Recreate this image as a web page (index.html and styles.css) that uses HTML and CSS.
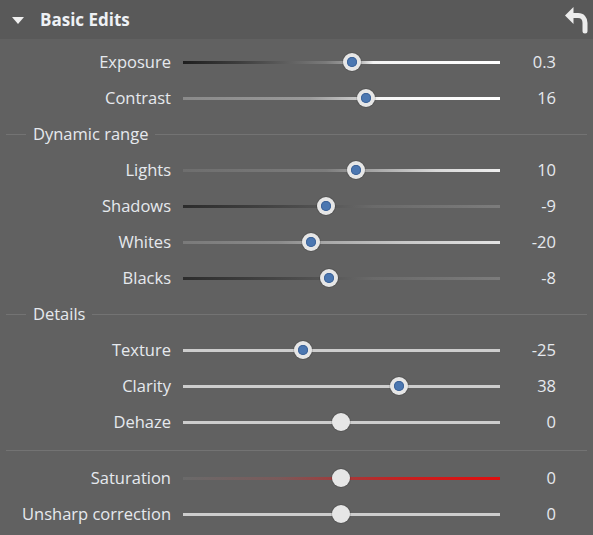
FILE: index.html
```html
<!DOCTYPE html>
<html>
<head>
<meta charset="utf-8">
<link rel="stylesheet" href="styles.css">
</head>
<body>
<div class="panel">
  <div class="header">
    <span class="caret"></span>
    <span class="title">Basic Edits</span>
    <svg class="revert" width="28" height="30" viewBox="0 0 28 30">
      <path d="M2 11.5 L10.5 3 L10.5 20 Z" fill="#ececec"/>
      <path d="M9 11.5 H15 C19.5 11.5 22 14.5 22 19 V27" fill="none" stroke="#ececec" stroke-width="5" stroke-linecap="round"/>
    </svg>
  </div>
  <div class="body">
    <div class="row"><span class="label">Exposure</span><div class="track t-exposure"><span class="knob blue" style="left:169px"></span></div><span class="value">0.3</span></div>
    <div class="row"><span class="label">Contrast</span><div class="track t-contrast"><span class="knob blue" style="left:183px"></span></div><span class="value">16</span></div>
    <div class="section"><span class="line short"></span><span class="stitle">Dynamic range</span><span class="line"></span></div>
    <div class="row"><span class="label">Lights</span><div class="track t-lights"><span class="knob blue" style="left:173px"></span></div><span class="value">10</span></div>
    <div class="row"><span class="label">Shadows</span><div class="track t-shadows"><span class="knob blue" style="left:143px"></span></div><span class="value">-9</span></div>
    <div class="row"><span class="label">Whites</span><div class="track t-whites"><span class="knob blue" style="left:128px"></span></div><span class="value">-20</span></div>
    <div class="row"><span class="label">Blacks</span><div class="track t-blacks"><span class="knob blue" style="left:146px"></span></div><span class="value">-8</span></div>
    <div class="section"><span class="line short"></span><span class="stitle">Details</span><span class="line"></span></div>
    <div class="row"><span class="label">Texture</span><div class="track t-plain"><span class="knob blue" style="left:120px"></span></div><span class="value">-25</span></div>
    <div class="row"><span class="label">Clarity</span><div class="track t-plain"><span class="knob blue" style="left:216px"></span></div><span class="value">38</span></div>
    <div class="row"><span class="label">Dehaze</span><div class="track t-plain"><span class="knob" style="left:158px"></span></div><span class="value">0</span></div>
    <div class="divider"></div>
    <div class="row"><span class="label">Saturation</span><div class="track t-sat"><span class="knob" style="left:158px"></span></div><span class="value">0</span></div>
    <div class="row"><span class="label">Unsharp correction</span><div class="track t-plain"><span class="knob" style="left:158px"></span></div><span class="value">0</span></div>
  </div>
</div>
</body>
</html>
```

FILE: styles.css
```css
html, body {
  margin: 0;
  padding: 0;
  background: #616161;
}
body {
  width: 593px;
  height: 535px;
  overflow: hidden;
  font-family: "Open Sans", "Noto Sans", sans-serif;
  color: #e6e9ee;
}
.panel {
  width: 593px;
  height: 535px;
  background: #616161;
}
.header {
  height: 39px;
  background: #595959;
  display: flex;
  align-items: center;
  padding-left: 12px;
  box-sizing: border-box;
  position: relative;
}
.caret {
  width: 0;
  height: 0;
  border-left: 6px solid transparent;
  border-right: 6px solid transparent;
  border-top: 7px solid #f0f0f0;
  margin-right: 16px;
  margin-top: 1px;
}
.title {
  font-weight: 700;
  font-size: 17px;
  color: #eef1f5;
}
.revert {
  position: absolute;
  left: 563px;
  top: 4px;
}
.body {
  padding-top: 5px;
}
.row {
  display: grid;
  grid-template-columns: 171px 317px 44px;
  column-gap: 12px;
  height: 36px;
  align-items: center;
  font-size: 16.5px;
}
.label {
  text-align: right;
  white-space: nowrap;
  margin-top: -2px;
}
.value {
  text-align: right;
  margin-top: -2px;
}
.track {
  position: relative;
  height: 3px;
  background: #c8c8c8;
}
.t-plain {
  background: #cdcdcd;
}
.t-exposure {
  background: linear-gradient(to right, #1e1e1e 0%, #3e3e3e 18%, #7a7a7a 45%, #aaaaaa 55%, #f4f4f4 60%, #ffffff 100%);
}
.t-contrast {
  background: linear-gradient(to right, #8a8a8a 0%, #9a9a9a 40%, #c8c8c8 55%, #f6f6f6 62%, #ffffff 100%);
}
.t-lights {
  background: linear-gradient(to right, #6e6e6e 0%, #7c7c7c 45%, #a0a0a0 58%, #d8d8d8 80%, #eeeeee 100%);
}
.t-shadows {
  background: linear-gradient(to right, #2c2c2c 0%, #3c3c3c 20%, #555555 45%, #6a6a6a 60%, #7c7c7c 100%);
}
.t-whites {
  background: linear-gradient(to right, #7a7a7a 0%, #8a8a8a 30%, #a8a8a8 45%, #c8c8c8 70%, #e4e4e4 100%);
}
.t-blacks {
  background: linear-gradient(to right, #2c2c2c 0%, #3c3c3c 20%, #555555 45%, #6a6a6a 60%, #7c7c7c 100%);
}
.t-sat {
  background: linear-gradient(to right, #6a6a6a 0%, #7a5a5a 30%, #a23a3a 50%, #c82020 70%, #e00e0e 100%);
}
.knob {
  position: absolute;
  top: 50%;
  width: 18px;
  height: 18px;
  margin-left: -9px;
  margin-top: -9px;
  border-radius: 50%;
  background: #e6e6e6;
  box-shadow: 0 0 0 1px rgba(0,0,0,0.12);
  box-sizing: border-box;
}
.knob.blue::after {
  content: "";
  position: absolute;
  left: 4px;
  top: 4px;
  width: 10px;
  height: 10px;
  border-radius: 50%;
  background: #4b77b1;
  box-shadow: inset 0 0 0 1px #3d6398;
}
.section {
  display: flex;
  align-items: center;
  height: 36px;
  padding: 0 6px;
  font-size: 16.5px;
}
.section .line {
  flex: 1;
  height: 1px;
  background: #737373;
}
.section .line.short {
  flex: 0 0 20px;
}
.stitle {
  padding: 0 7px;
  margin-top: -2px;
}
.divider {
  height: 20px;
  display: flex;
  align-items: center;
  padding: 0 6px;
}
.divider::before {
  content: "";
  flex: 1;
  height: 1px;
  background: #737373;
}
```
